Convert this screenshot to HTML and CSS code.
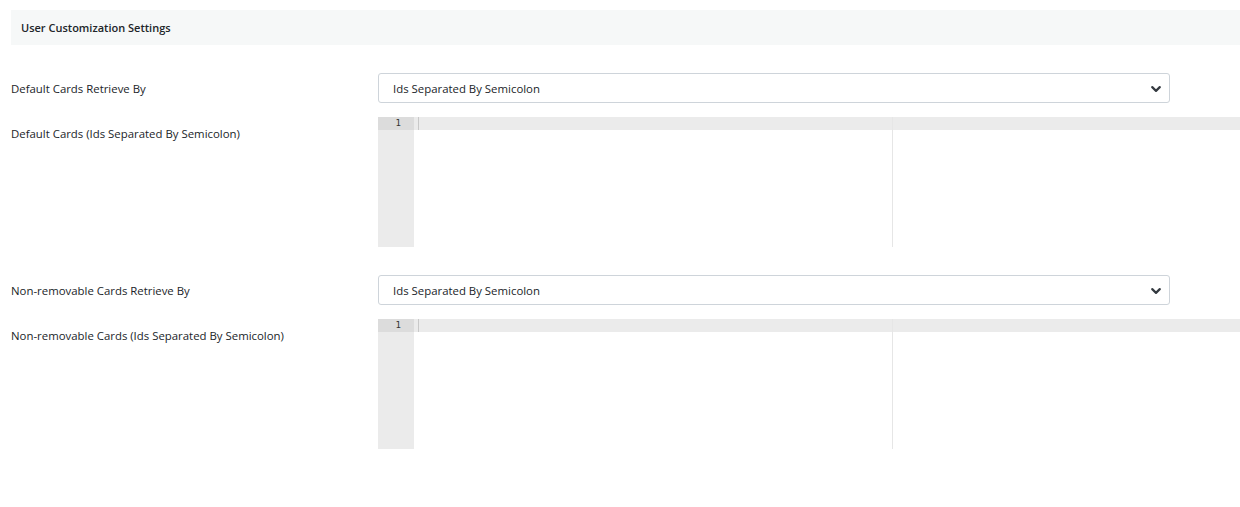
FILE: index.html
```html
<!DOCTYPE html>
<html lang="en">
<head>
    <meta charset="UTF-8">
    <title>User Customization Settings</title>
    <link rel="stylesheet" href="styles.css">
</head>
<body>

    <div class="panel-heading">User Customization Settings</div>

    <div class="form">
        <div class="row">
            <label class="label label-mid">Default Cards Retrieve By</label>
            <div class="select">
                <span>Ids Separated By Semicolon</span>
                <svg class="chevron" viewBox="0 0 16 16" width="10" height="10"><path fill="none" stroke="#343a40" stroke-linecap="round" stroke-linejoin="round" stroke-width="3.4" d="M2 5l6 6 6-6"/></svg>
            </div>
        </div>
        <div class="row">
            <label class="label label-top">Default Cards (Ids Separated By Semicolon)</label>
            <div class="editor">
                <div class="gutter"><div class="gutter-cell">1</div></div>
                <div class="content">
                    <div class="active-line"><span class="cursor"></span></div>
                    <div class="print-margin"></div>
                </div>
            </div>
        </div>

        <div class="row row-gap">
            <label class="label label-mid">Non-removable Cards Retrieve By</label>
            <div class="select">
                <span>Ids Separated By Semicolon</span>
                <svg class="chevron" viewBox="0 0 16 16" width="10" height="10"><path fill="none" stroke="#343a40" stroke-linecap="round" stroke-linejoin="round" stroke-width="3.4" d="M2 5l6 6 6-6"/></svg>
            </div>
        </div>
        <div class="row">
            <label class="label label-top">Non-removable Cards (Ids Separated By Semicolon)</label>
            <div class="editor">
                <div class="gutter"><div class="gutter-cell">1</div></div>
                <div class="content">
                    <div class="active-line"><span class="cursor"></span></div>
                    <div class="print-margin"></div>
                </div>
            </div>
        </div>
    </div>

</body>
</html>
```

FILE: styles.css
```css
html, body {
    overflow: hidden;
}

body {
    margin: 0;
    padding: 10px 0 0 11px;
    font-family: "Open Sans", sans-serif;
    font-size: 11.4px;
    color: #212529;
    background-color: #fff;
}

.panel-heading {
    height: 35px;
    line-height: 36px;
    padding-left: 10px;
    background-color: #f6f8f8;
    font-size: 11px;
    font-weight: 600;
}

.form {
    padding-top: 28px;
}

.row {
    display: flex;
    margin-top: 14px;
}

.row:first-child {
    margin-top: 0;
}

.row-gap {
    margin-top: 28px;
}

.label {
    width: 367px;
    flex-shrink: 0;
}

.label-mid {
    box-sizing: border-box;
    height: 30px;
    padding-top: 1px;
    line-height: 30px;
}

.label-top {
    padding-top: 9px;
}

.select {
    box-sizing: border-box;
    width: 792px;
    height: 30px;
    border: 1px solid #ced4da;
    border-radius: 3px;
    padding: 0 8px 0 14px;
    display: flex;
    align-items: center;
    justify-content: space-between;
}

.chevron {
    margin-top: 1px;
}

.editor {
    display: flex;
    width: 900px;
    height: 130px;
    flex-shrink: 0;
}

.gutter {
    width: 36px;
    background-color: #ebebeb;
}

.gutter-cell {
    height: 13px;
    line-height: 13px;
    background-color: #dcdcdc;
    font-family: "DejaVu Sans Mono", monospace;
    font-size: 9px;
    text-align: right;
    padding-right: 13px;
    color: #333;
}

.content {
    position: relative;
    flex: 1;
}

.active-line {
    height: 13px;
    background-color: #ebebeb;
}

.cursor {
    display: block;
    margin-left: 4px;
    width: 1px;
    height: 13px;
    background-color: #c8c8c8;
}

.print-margin {
    position: absolute;
    left: 478px;
    top: 0;
    bottom: 0;
    width: 1px;
    background-color: #e6e6e6;
}
```
